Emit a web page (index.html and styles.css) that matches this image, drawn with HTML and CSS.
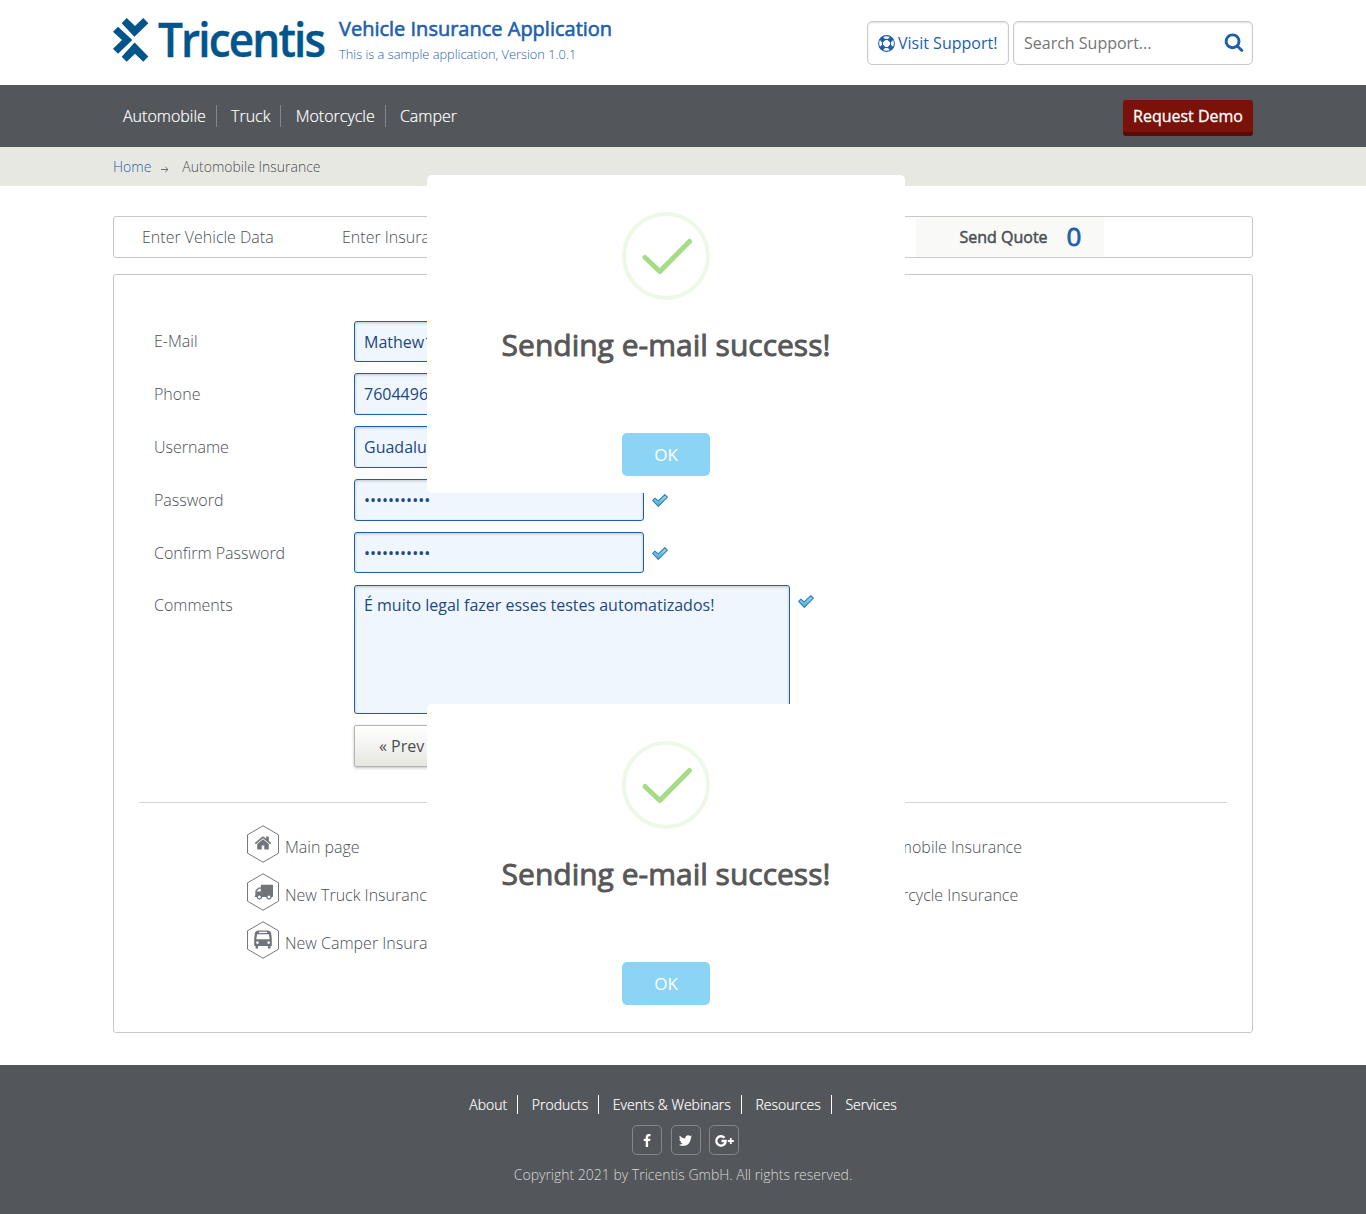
FILE: index.html
```html
<!DOCTYPE html>
<html lang="en">
<head>
<meta charset="utf-8">
<title>Vehicle Insurance Application</title>
<link rel="stylesheet" href="styles.css">
</head>
<body>
<svg class="defs" width="0" height="0">
  <defs>
    <linearGradient id="tickfill" x1="0" y1="0" x2="0" y2="1"><stop offset="0" stop-color="#9be0f8"/><stop offset="1" stop-color="#4aa8d4"/></linearGradient>
    <symbol id="tick" viewBox="0 0 16 13"><path d="M.7 6.400 2.900 4.200l3.400 2.700L12.800.7l2.600 2.400-9.100 9.300z" fill="url(#tickfill)" stroke="#3a85ad" stroke-width="1.200" stroke-linejoin="round"/></symbol>
    <symbol id="success" viewBox="0 0 88 88"><circle cx="44" cy="44" r="42" fill="none" stroke="#edf8e7" stroke-width="4"/><path d="M23 45.500 37.800 59.500 67.500 29.500" fill="none" stroke="#a5dc86" stroke-width="5" stroke-linecap="round" stroke-linejoin="round"/></symbol>
    <symbol id="hex" viewBox="0 0 32 38"><path d="M16 .8 31.500 9.800v18.400L16 37.200.5 28.200V9.800z" fill="#fff" stroke="#777a7d"/></symbol>
  </defs>
</svg>
<header class="wrap top">
  <svg class="logo" width="214" height="60" viewBox="0 0 214 60">
    <g fill="#00558c">
      <path d="M8.700 5.300 13.700 0 22 8l8.300-8 5 5.300L21.400 18.800z"/>
      <path d="M0 13.700 5 8.700 19.300 22 5 35.700 0 30.700 9 22z"/>
      <path d="M21.600 24.400 35.300 38.500 30.300 43.800 22 35.700l-8.300 8.100-5-5.100z"/>
    </g>
    <text class="logo-text" x="45" y="39" textLength="166" lengthAdjust="spacingAndGlyphs">Tricentis</text>
  </svg>
  <div class="brand"><div class="title">Vehicle Insurance Application</div><div class="sub">This is a sample application, Version 1.0.1</div></div>
  <div class="tools">
    <a class="box visit"><svg width="17" height="17" viewBox="0 0 16 16" fill="none" stroke="#1e5fad"><circle cx="8" cy="8" r="7.400"/><circle cx="8" cy="8" r="3.900"/><g stroke-width="4.200"><path d="m2.800 2.800 2.900 2.900M10.300 10.300l2.900 2.900M13.200 2.800l-2.900 2.900M5.700 10.300l-2.900 2.900"/></g></svg><span>Visit Support!</span></a>
    <div class="box search"><span>Search Support...</span><svg width="20" height="20" viewBox="0 0 1792 1792" fill="#1e5fad"><path d="M1216 832q0-185-131.500-316.500t-316.500-131.500-316.500 131.500-131.500 316.500 131.500 316.500 316.500 131.500 316.500-131.500 131.500-316.500zm512 832q0 52-38 90t-90 38q-54 0-90-38l-343-342q-179 124-399 124-143 0-273.500-55.500t-225-150-150-225-55.500-273.500 55.500-273.500 150-225 225-150 273.500-55.500 273.500 55.500 225 150 150 225 55.500 273.500q0 220-124 399l343 343q37 37 37 90z"/></svg></div>
  </div>
</header>
<nav class="bar"><div class="wrap bar-in">
  <ul class="menu"><li>Automobile</li><li>Truck</li><li>Motorcycle</li><li>Camper</li></ul>
  <a class="demo">Request Demo</a>
</div></nav>
<div class="crumbs"><div class="wrap crumbs-in"><a>Home</a><svg width="8" height="7" viewBox="0 0 8 7" fill="none" stroke="#6c7074"><path d="M0 3.500h7M4.300 1 7 3.500 4.300 6"/></svg><span>Automobile Insurance</span></div></div>
<main class="wrap">
  <div class="tabs"><span class="tab">Enter Vehicle Data</span><span class="tab">Enter Insurant Data</span><span class="tab current"><b>Send Quote</b><i>0</i></span></div>
  <section class="panel">
    <form>
      <div class="row"><label>E-Mail</label><div class="field">Mathew1</div></div>
      <div class="row"><label>Phone</label><div class="field">7604496</div></div>
      <div class="row"><label>Username</label><div class="field">Guadalupe</div></div>
      <div class="row"><label>Password</label><div class="field">•••••••••••</div><svg class="tick" width="16" height="13"><use href="#tick"/></svg></div>
      <div class="row"><label>Confirm Password</label><div class="field">•••••••••••</div><svg class="tick" width="16" height="13"><use href="#tick"/></svg></div>
      <div class="row area"><label>Comments</label><div class="field big">É muito legal fazer esses testes automatizados!</div><svg class="tick" width="16" height="13"><use href="#tick"/></svg></div>
      <div class="row"><label></label><div class="prev">« Prev</div></div>
    </form>
    <div class="links">
      <a><svg class="hex" width="32" height="38"><use href="#hex"/><svg x="7" y="9" width="18" height="18" viewBox="0 0 1792 1792"><path d="M1472 992v480q0 26-19 45t-45 19h-384v-384h-256v384h-384q-26 0-45-19t-19-45v-480q0-1 .5-3t.5-3l575-474 575 474q1 2 1 6zm223-69l-62 74q-8 9-21 11h-3q-13 0-21-7l-692-577-692 577q-12 8-24 7-13-2-21-11l-62-74q-8-10-7-23.500t11-21.500l719-599q32-26 76-26t76 26l244 204v-195q0-14 9-23t23-9h192q14 0 23 9t9 23v408l219 182q10 8 11 21.500t-7 23.500z"/></svg></svg><span>Main page</span></a>
      <a><span>New Automobile Insurance</span></a>
      <a><svg class="hex" width="32" height="38"><use href="#hex"/><svg x="7" y="9" width="19" height="19" viewBox="0 0 1792 1792"><path d="M640 1408q0-52-38-90t-90-38-90 38-38 90 38 90 90 38 90-38 38-90zm-384-512h384v-256h-158q-13 0-22 9l-195 195q-9 9-9 22v30zm1280 512q0-52-38-90t-90-38-90 38-38 90 38 90 90 38 90-38 38-90zm256-1088v1024q0 15-4 26.500t-13.500 18.500-16.500 11.500-23.500 6-22.500 2-25.500 0-22.500-.5q0 106-75 181t-181 75-181-75-75-181h-384q0 106-75 181t-181 75-181-75-75-181h-64q-3 0-22.500.5t-25.500 0-22.500-2-23.500-6-16.500-11.500-13.500-18.500-4-26.500q0-26 19-45t45-19v-320q0-8-.5-35t0-38 2.500-34.500 6.500-37 14-30.500 22.500-30l198-198q19-19 50.500-32t58.500-13h160v-192q0-26 19-45t45-19h1024q26 0 45 19t19 45z"/></svg></svg><span>New Truck Insurance</span></a>
      <a><span>New Motorcycle Insurance</span></a>
      <a><svg class="hex" width="32" height="38"><use href="#hex"/><path fill-rule="evenodd" d="M11.500 9.500h9q3.200 0 3.700 3l.6 5V25h-1.300v1.500q0 1.200-1.300 1.200t-1.300-1.200V25h-9.800v1.500q0 1.200-1.300 1.200t-1.300-1.200V25H7.200v-7.500l.6-5q.5-3 3.700-3zm.5 1.300v1.200h8v-1.200zm-1.800 2.400-.9 5h13.400l-.9-5zM10.400 20.300a1.300 1.300 0 1 0 .1 0zM21.600 20.300a1.300 1.300 0 1 0 .1 0z"/></svg><span>New Camper Insurance</span></a>
    </div>
  </section>
</main>
<footer>
  <ul class="foot"><li>About</li><li>Products</li><li>Events &amp; Webinars</li><li>Resources</li><li>Services</li></ul>
  <div class="social">
    <a><svg width="14" height="14" viewBox="0 0 1792 1792" fill="#fff"><path d="M1343 12v264h-157q-86 0-116 36t-30 108v189h293l-39 296h-254v759h-306v-759h-255v-296h255v-218q0-186 104-288.500t277-102.500q147 0 228 12z"/></svg></a>
    <a><svg width="15" height="15" viewBox="0 0 1792 1792" fill="#fff"><path d="M1684 408q-67 98-162 167 1 14 1 42 0 130-38 259.500t-115.500 248.500-184.500 210.500-258 146-323 54.500q-271 0-496-145 35 4 78 4 225 0 401-138-105-2-188-64.500t-114-159.500q33 5 61 5 43 0 85-11-112-23-185.500-111.500t-73.500-205.500v-4q68 38 146 41-66-44-105-115t-39-154q0-88 44-163 121 149 294.500 238.500t371.500 99.500q-8-38-8-74 0-134 94.500-228.500t228.500-94.500q140 0 236 102 109-21 205-78-37 115-142 178 93-10 186-50z"/></svg></a>
    <a><svg width="20" height="14" viewBox="0 0 20 14" fill="none" stroke="#fff"><path d="M10.500 3.800A4.700 4.700 0 1 0 11.700 7H7.500" stroke-width="2.300"/><path d="M13.800 7h6M16.800 4v6" stroke-width="1.800"/></svg></a>
  </div>
  <p class="copy">Copyright 2021 by Tricentis GmbH. All rights reserved.</p>
</footer>
<div class="modal first"><svg width="88" height="88"><use href="#success"/></svg><h2>Sending e-mail success!</h2><button>OK</button></div>
<div class="modal second"><svg width="88" height="88"><use href="#success"/></svg><h2>Sending e-mail success!</h2><button>OK</button></div>
</body>
</html>
```
FILE: styles.css
```css
* { box-sizing: border-box; }
body { margin: 0; height: 1214px; position: relative; overflow: hidden; background: #fff; color: #4b4f54; font: 300 16px/24px "Open Sans", sans-serif; }
svg { display: block; flex: none; }
.defs { position: absolute; }
ul { list-style: none; margin: 0; padding: 0; display: flex; }
.wrap { width: 1140px; margin: 0 auto; }
.top { height: 85px; display: flex; align-items: flex-start; }
.logo { margin-top: 18px; overflow: visible; }
.logo-text { font: 600 47px "Open Sans", sans-serif; letter-spacing: -2px; fill: #00558c; stroke: #00558c; stroke-width: .4px; }
.brand { margin: 16px 0 0 12px; color: #1e5fad; }
.title { font-size: 20px; font-weight: 400; -webkit-text-stroke: .6px; line-height: 26px; }
.sub { font-size: 12.800px; line-height: 24px; }
.tools { margin: 21px 0 0 auto; display: flex; gap: 4px; }
.box { height: 44px; border: 1px solid #c8c9ca; border-radius: 5px; box-shadow: inset 0 1px 2px rgba(0,0,0,.12); display: flex; align-items: center; padding: 0 10px; font-weight: 400; }
.visit { width: 142px; gap: 3px; color: #1e5fad; white-space: nowrap; }
.search { width: 240px; justify-content: space-between; color: #757575; padding-right: 8px; }
.search svg { margin-top: -2px; }
.bar { background: #53565a; height: 62px; }
.bar-in { display: flex; justify-content: space-between; padding-top: 15px; }
.menu { color: #fff; padding-top: 5px; -webkit-text-stroke: .2px; }
.menu li { height: 22px; line-height: 22px; padding: 0 10px; border-right: 1px solid #85888b; margin-right: 4.200px; }
.menu li:last-child { border: 0; }
.demo { width: 130px; height: 36px; border-radius: 3px; background: #7b1209; border-bottom: 4px solid #5b0c06; color: #fff; font-weight: 400; -webkit-text-stroke: .3px; line-height: 32px; text-align: center; }
.crumbs { background: #e8e8e3; height: 39px; }
.crumbs-in { display: flex; align-items: center; font-size: 14px; height: 39px; }
.crumbs-in a { color: #1e5fad; }
.crumbs-in svg { margin: 5px 13px 0 10px; }
.tabs { margin-top: 30px; height: 42px; border: 1px solid #c8c9ca; border-radius: 3px; display: flex; line-height: 40px; }
.tab { width: 200px; padding-left: 28px; white-space: nowrap; }
.current { width: 188px; margin-left: 402px; padding: 0 0 0 21px; background: #f9f9f7; display: flex; justify-content: center; gap: 19px; }
.current b { font-weight: 400; -webkit-text-stroke: .5px; }
.current i { font-style: normal; font-weight: 400; -webkit-text-stroke: .8px; font-size: 26px; line-height: 38px; color: #1e5fad; }
.panel { margin-top: 16px; height: 759px; border: 1px solid #c8c9ca; border-radius: 3px; padding: 45.600px 25px 0; }
form { display: flex; flex-direction: column; gap: 11.200px; padding: 0 0 35.400px 15px; border-bottom: 1px solid #d4d5d6; }
.row { display: flex; align-items: center; height: 41.600px; }
label { width: 200px; }
.field { width: 290px; height: 41.600px; border: 1px solid #1e5fad; border-radius: 3px; background: #eff6fe; box-shadow: inset 0 1px 3px rgba(0,0,0,.2); color: #22497d; font-weight: 400; padding: 0 9px; line-height: 40.200px; white-space: nowrap; overflow: hidden; }
.tick { margin: 1px 0 0 8px; }
.area { height: 129px; align-items: flex-start; }
.area label { line-height: 40px; }
.area .tick { margin-top: 10px; }
.big { width: 436px; height: 129px; line-height: 39.400px; }
.prev { width: 120px; height: 42px; margin-top: 1px; border: 1px solid #b3b4b5; border-radius: 2px; background: linear-gradient(#fff, #e7e7e2); box-shadow: 0 1px 3px rgba(0,0,0,.25); padding-left: 24px; line-height: 40px; font-weight: 400; }
.links { display: grid; grid-template-columns: 581px 1fr; grid-auto-rows: 48px; padding: 22.400px 0 0 108px; }
.links a { display: flex; gap: 6px; align-items: flex-start; }
.links a > span { margin-top: 10px; }
.hex { fill: #6f757a; margin-top: .1px; }
footer { margin-top: 32px; height: 149px; background: #53565a; padding-top: 30px; display: flex; flex-direction: column; align-items: center; }
.foot { color: #fff; font-size: 14px; -webkit-text-stroke: .2px; }
.foot li { height: 19px; line-height: 19px; padding: 0 10px; border-right: 1px solid #fff; margin-right: 3.700px; }
.foot li:last-child { border: 0; margin: 0; }
.social { display: flex; gap: 8.500px; margin: 11px 0 0 5px; }
.social a { width: 30px; height: 30px; border: 1px solid #85888b; border-radius: 5px; display: flex; align-items: center; justify-content: center; padding-top: 1px; }
.copy { margin: 8px 0 0; font-size: 14px; color: #d9d9d6; }
.modal { position: absolute; left: 427px; width: 478px; height: 318px; background: #fff; border-radius: 5px; display: flex; flex-direction: column; align-items: center; padding-top: 37px; }
.first { top: 175px; }
.second { top: 704px; }
.modal h2 { margin: 25px 0 0; font-size: 30px; line-height: 40px; font-weight: 400; -webkit-text-stroke: .9px; color: #575757; white-space: nowrap; }
.modal button { margin-top: 68px; width: 88px; height: 43px; border: 0; border-radius: 5px; background: #8cd4f5; color: #fff; font: 400 17px "Open Sans", sans-serif; }
```
